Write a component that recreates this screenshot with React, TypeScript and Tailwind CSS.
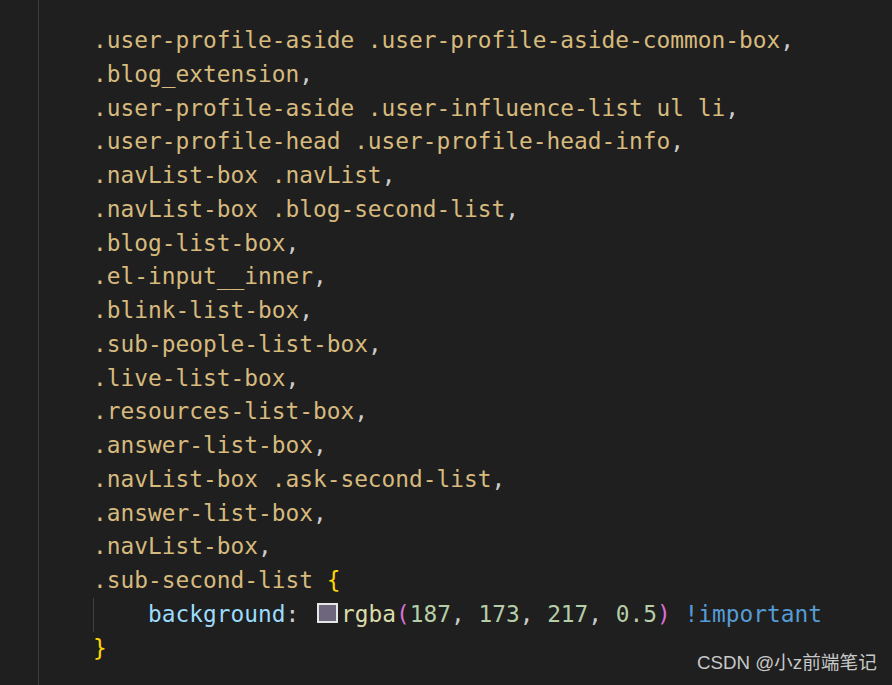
import React from "react";

const selectors = [
  ".user-profile-aside .user-profile-aside-common-box",
  ".blog_extension",
  ".user-profile-aside .user-influence-list ul li",
  ".user-profile-head .user-profile-head-info",
  ".navList-box .navList",
  ".navList-box .blog-second-list",
  ".blog-list-box",
  ".el-input__inner",
  ".blink-list-box",
  ".sub-people-list-box",
  ".live-list-box",
  ".resources-list-box",
  ".answer-list-box",
  ".navList-box .ask-second-list",
  ".answer-list-box",
  ".navList-box",
];

export default function App() {
  return (
    <div className="w-full h-[685px] bg-[#1f1f1f] flex overflow-hidden relative">
      <div className="w-[39px] shrink-0 border-r border-[#3b3b3b]" />
      <div
        className="pl-[54px] pt-[24px] text-[22.84px] leading-[33.75px] whitespace-pre text-[#d7ba7d]"
        style={{ fontFamily: '"DejaVu Sans Mono", monospace' }}
      >
        {selectors.map((s, i) => (
          <div key={i}>
            {s}
            <span className="text-[#cccccc]">,</span>
          </div>
        ))}
        <div>
          .sub-second-list <span className="text-[#ffd700]">{"{"}</span>
        </div>
        <div className="relative">
          <span className="absolute left-0 top-0 h-full w-px bg-[#404040]" />
          {"    "}
          <span className="text-[#9cdcfe]">background</span>
          <span className="text-[#cccccc]">: </span>
          <span className="inline-block w-[21px] h-[20px] border-2 border-[#e6e6e6] bg-[#6d667c] ml-[4px] mr-[3px] align-[-1px]" />
          <span className="text-[#dcdcaa]">rgba</span>
          <span className="text-[#da70d6]">(</span>
          <span className="text-[#b5cea8]">187</span>
          <span className="text-[#cccccc]">, </span>
          <span className="text-[#b5cea8]">173</span>
          <span className="text-[#cccccc]">, </span>
          <span className="text-[#b5cea8]">217</span>
          <span className="text-[#cccccc]">, </span>
          <span className="text-[#b5cea8]">0.5</span>
          <span className="text-[#da70d6]">)</span>
          <span className="text-[#cccccc]"> </span>
          <span className="text-[#569cd6]">!important</span>
        </div>
        <div>
          <span className="text-[#ffd700]">{"}"}</span>
        </div>
      </div>
      <div
        className="absolute left-[697px] top-[651px] text-[18.7px] leading-[24px] text-[#c8c8c8] whitespace-nowrap"
        style={{ fontFamily: '"Liberation Sans", "Noto Sans CJK SC", sans-serif' }}
      >
        CSDN @小z前端笔记
      </div>
    </div>
  );
}
